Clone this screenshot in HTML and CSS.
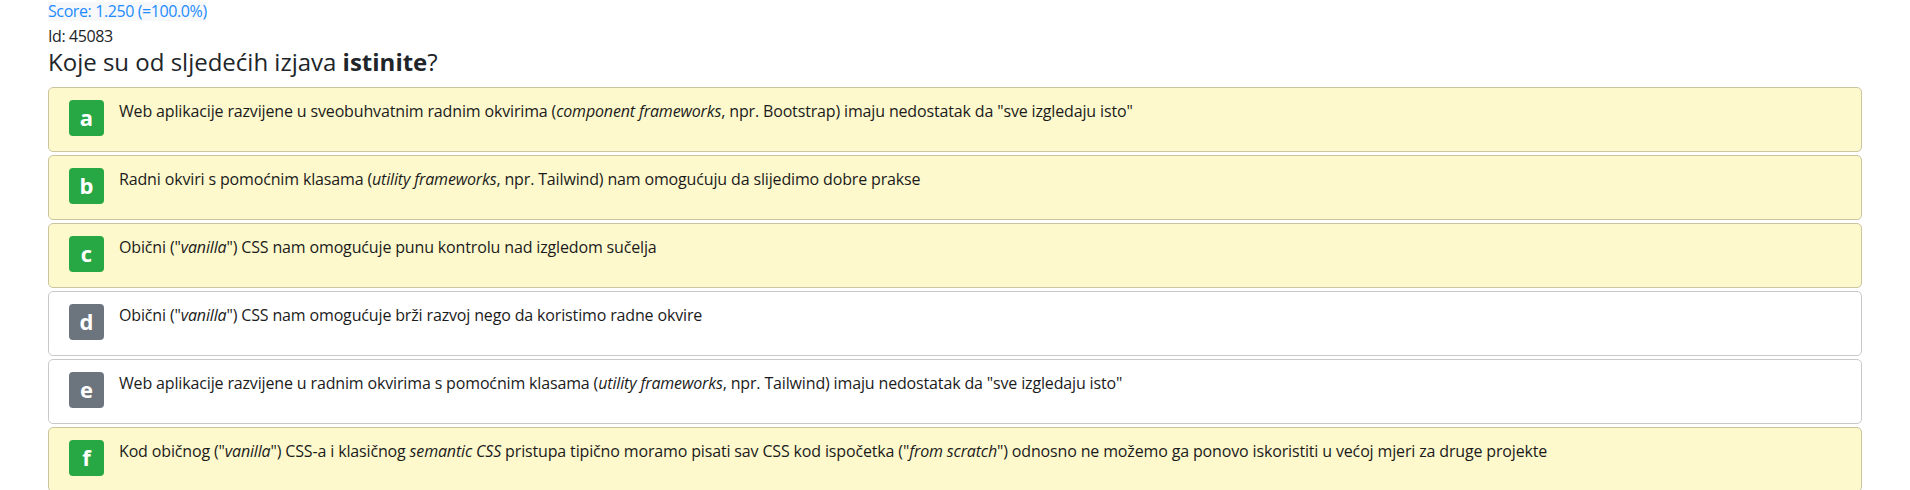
FILE: index.html
```html
<!DOCTYPE html>
<html lang="hr">
<head>
<meta charset="utf-8">
<title>Pitanje 45083</title>
<link rel="stylesheet" href="styles.css">
</head>
<body>
<main class="question">
  <div class="score">Score: 1.250 (=100.0%)</div>
  <div class="qid">Id: 45083</div>
  <h1 class="qtitle">Koje su od sljedećih izjava <b>istinite</b>?</h1>
  <ul class="answers">
    <li class="answer answer--marked">
      <span class="badge badge--green">a</span>
      <span class="answer-text">Web aplikacije razvijene u sveobuhvatnim radnim okvirima (<i>component frameworks</i>, npr. Bootstrap) imaju nedostatak da "sve izgledaju isto"</span>
    </li>
    <li class="answer answer--marked">
      <span class="badge badge--green">b</span>
      <span class="answer-text">Radni okviri s pomoćnim klasama (<i>utility frameworks</i>, npr. Tailwind) nam omogućuju da slijedimo dobre prakse</span>
    </li>
    <li class="answer answer--marked">
      <span class="badge badge--green">c</span>
      <span class="answer-text">Obični ("<i>vanilla</i>") CSS nam omogućuje punu kontrolu nad izgledom sučelja</span>
    </li>
    <li class="answer">
      <span class="badge badge--gray">d</span>
      <span class="answer-text">Obični ("<i>vanilla</i>") CSS nam omogućuje brži razvoj nego da koristimo radne okvire</span>
    </li>
    <li class="answer">
      <span class="badge badge--gray">e</span>
      <span class="answer-text">Web aplikacije razvijene u radnim okvirima s pomoćnim klasama (<i>utility frameworks</i>, npr. Tailwind) imaju nedostatak da "sve izgledaju isto"</span>
    </li>
    <li class="answer answer--marked">
      <span class="badge badge--green">f</span>
      <span class="answer-text">Kod običnog ("<i>vanilla</i>") CSS-a i klasičnog <i>semantic CSS</i> pristupa tipično moramo pisati sav CSS kod ispočetka ("<i>from scratch</i>") odnosno ne možemo ga ponovo iskoristiti u većoj mjeri za druge projekte</span>
    </li>
  </ul>
</main>
</body>
</html>
```
FILE: styles.css
```css
html, body {
  margin: 0;
  padding: 0;
  background: #ffffff;
}

body {
  font-family: "Open Sans", "Noto Sans", sans-serif;
  color: #212529;
}

.question {
  padding: 0 48px;
}

.score {
  display: inline-block;
  margin-top: 2px;
  font-size: 16px;
  line-height: 19px;
  color: #1e8cff;
  background: #f6f8fa;
  letter-spacing: -0.4px;
}

.qid {
  margin-top: 6px;
  font-size: 16px;
  line-height: 17px;
  letter-spacing: -0.4px;
  color: #212529;
}

.qtitle {
  margin: 2px 0 11px 0;
  font-size: 24px;
  line-height: 29px;
  font-weight: 400;
  color: #212529;
}

.qtitle b {
  font-weight: 700;
}

.answers {
  list-style: none;
  margin: 0;
  padding: 0;
  display: flex;
  flex-direction: column;
  gap: 3px;
}

.answer {
  display: flex;
  align-items: flex-start;
  gap: 15px;
  height: 65px;
  box-sizing: border-box;
  padding: 12px 20px 0 20px;
  border: 1px solid #c9c9c9;
  border-radius: 5px;
  background: #ffffff;
}

.answer--marked {
  background: #fdf9cd;
  border-color: #cbc59f;
}

.badge {
  flex: 0 0 auto;
  width: 35px;
  height: 36px;
  border-radius: 4px;
  display: flex;
  align-items: center;
  justify-content: center;
  color: #ffffff;
  font-size: 22px;
  font-weight: 700;
  line-height: 1;
  padding-bottom: 2px;
  box-sizing: border-box;
}

.badge--green {
  background: #28a745;
}

.badge--gray {
  background: #6c757d;
}

.answer-text {
  font-size: 16px;
  line-height: 22px;
  letter-spacing: -0.15px;
  color: #1b1b1b;
}
```
